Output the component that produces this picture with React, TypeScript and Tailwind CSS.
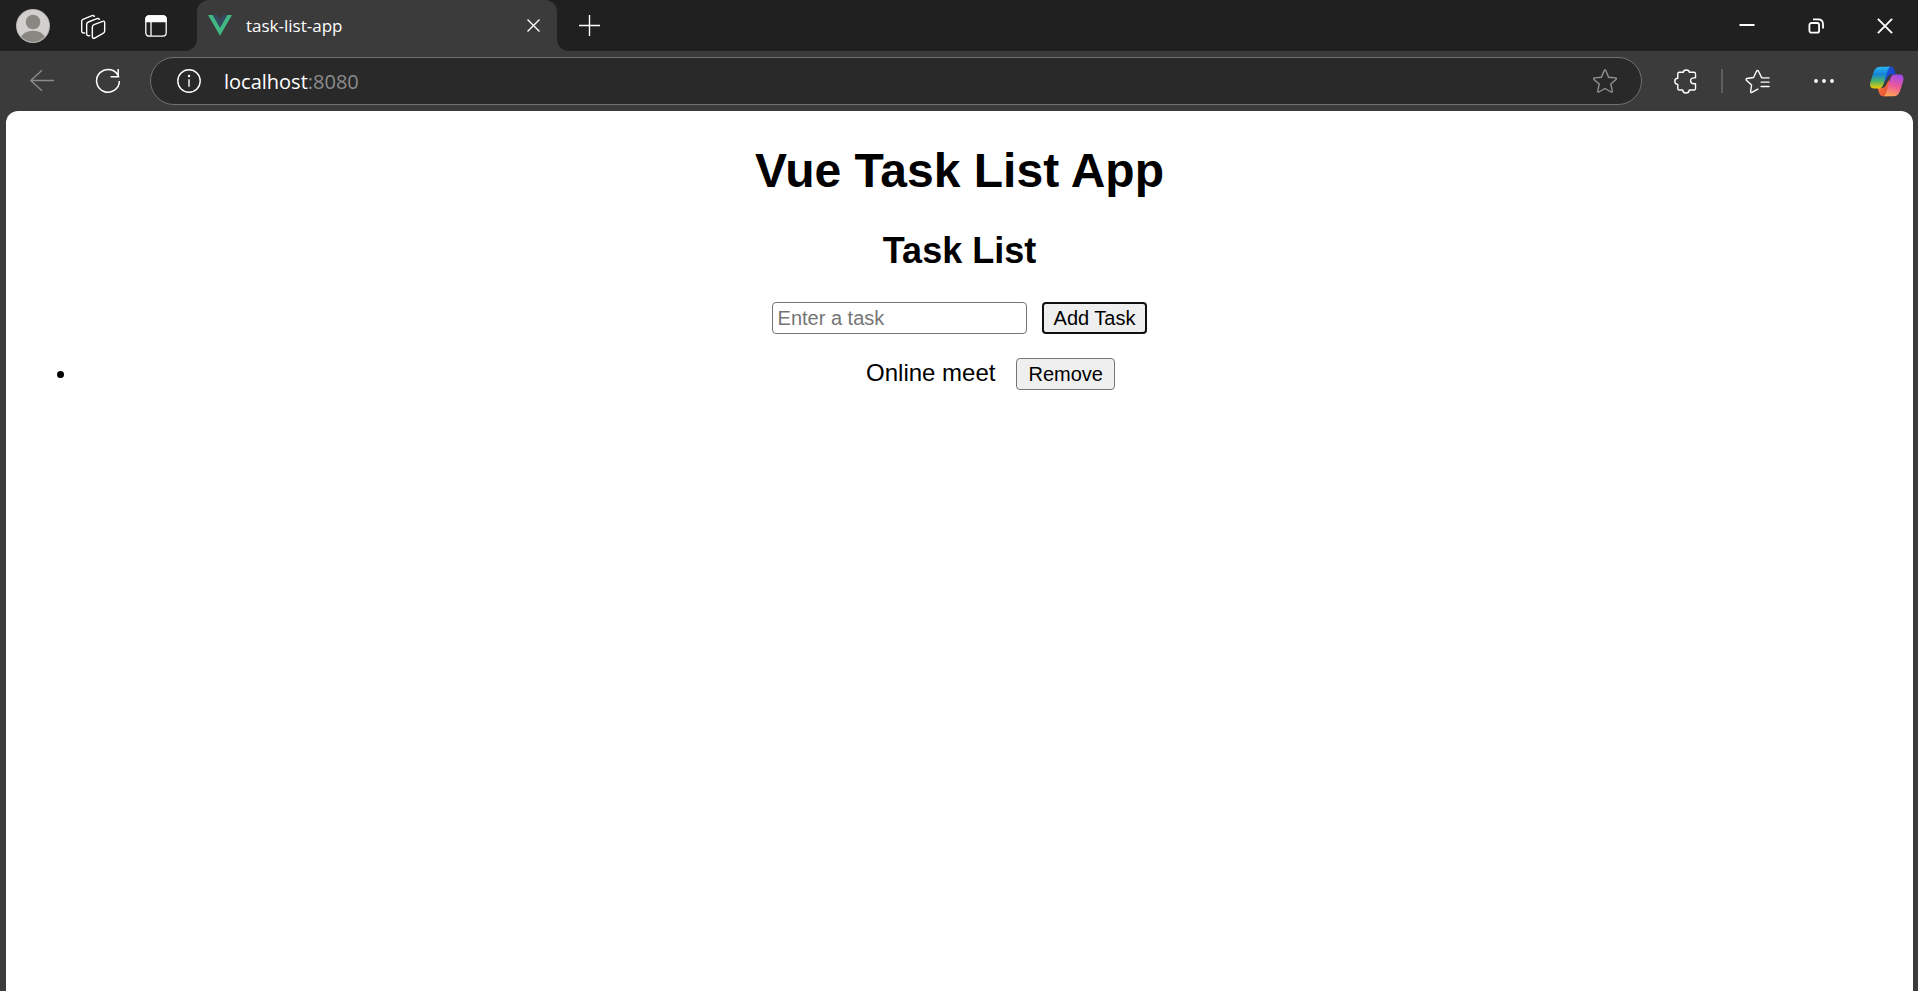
import { useState, type FormEvent, type ReactNode } from "react";

type IconButtonProps = { label: string; children: ReactNode; className?: string };

function IconButton({ label, children, className = "w-9 h-9" }: IconButtonProps) {
  return (
    <button type="button" aria-label={label} className={`flex shrink-0 items-center justify-center ${className}`}>
      {children}
    </button>
  );
}

function TabStrip() {
  return (
    <header className="flex h-[51px] bg-[#3b3b3b] text-white">
      <div className="flex w-[197px] shrink-0 items-center rounded-br-xl bg-[#202020] pl-4 pt-px">
        <IconButton label="Profile" className="h-[34px] w-[34px]">
          <svg viewBox="0 0 34 34" className="h-[34px] w-[34px]">
            <defs>
              <clipPath id="avatar">
                <circle cx="17" cy="17" r="16" />
              </clipPath>
            </defs>
            <circle cx="17" cy="17" r="17" fill="#b9b7b4" />
            <circle cx="17" cy="17" r="16" fill="#d2d0ce" />
            <g clipPath="url(#avatar)" fill="#8a8682">
              <circle cx="17" cy="13" r="7.3" />
              <ellipse cx="17" cy="33" rx="13.5" ry="11.3" />
            </g>
          </svg>
        </IconButton>
        <IconButton label="Workspaces" className="ml-[25px] h-9 w-9">
          <svg viewBox="243 39 75 75" className="h-[25px] w-[25px]" fill="none" stroke="#fff" strokeWidth="4.2" strokeLinecap="round">
            <path d="M277 78q0-5 5-7l26-10q6-2 6 4v25q0 5-5 7l-25 14q-7 3-7-4z" />
            <path d="M269 104q-9 2-9-6V70q0-5 5-7l26-10q5-2 7 2" />
            <path d="M254 96q-9 1-9-6V61q0-4 4-6l27-11q5-2 7 2" />
          </svg>
        </IconButton>
        <IconButton label="Tab actions" className="ml-[27px] h-9 w-9">
          <svg viewBox="0 0 22 22" className="h-[22px] w-[22px]" fill="none" stroke="#fff" strokeWidth="1.3">
            <rect x="0.8" y="0.8" width="20.4" height="20.4" rx="3.4" />
            <path d="M1 6.7V4Q1 1 4 1h14q3 0 3 3v2.700z" fill="#fff" />
            <path d="M6 6v15" />
          </svg>
        </IconButton>
      </div>
      <div className="w-[360px] shrink-0 bg-[#202020]">
        <div className="flex h-full items-center rounded-t-xl bg-[#3b3b3b] pl-[11px] pr-[6px]">
          <svg viewBox="0 0 24 21" className="h-[21px] w-6 shrink-0">
            <path d="M0 0h4.800L12 12.400 19.200 0H24L12 20.800z" fill="#41b883" />
            <path d="M4.800 0h4.400L12 4.800 14.800 0h4.400L12 12.400z" fill="#35495e" />
          </svg>
          <span className="ml-[14px] flex-1 font-['Open_Sans','Noto_Sans',sans-serif] text-[17px] leading-6">task-list-app</span>
          <IconButton label="Close tab">
            <svg viewBox="0 0 13 13" className="h-[13px] w-[13px]" fill="none" stroke="#fff" strokeWidth="1.4">
              <path d="M.5.5l12 12M12.500.5l-12 12" />
            </svg>
          </IconButton>
        </div>
      </div>
      <div className="flex flex-1 items-center justify-between rounded-bl-xl bg-[#202020] pl-[14px] pr-[17px]">
        <IconButton label="New tab">
          <svg viewBox="0 0 21 21" className="h-[21px] w-[21px]" fill="none" stroke="#fff" strokeWidth="1.4">
            <path d="M10.500 0v21M0 10.500h21" />
          </svg>
        </IconButton>
        <div className="flex gap-[37px]">
          <IconButton label="Minimize" className="h-8 w-8">
            <svg viewBox="0 0 16 16" className="h-4 w-4" stroke="#fff" strokeWidth="2">
              <path d="M.5 7h15" />
            </svg>
          </IconButton>
          <IconButton label="Restore" className="h-8 w-8">
            <svg viewBox="0 0 16 16" className="h-4 w-4" fill="none" stroke="#fff" strokeWidth="1.8">
              <rect x="1.400" y="5" width="9.700" height="9.700" rx="2" />
              <path d="M5 1.400h5.200Q15 1.400 15 6.200v4.300" />
            </svg>
          </IconButton>
          <IconButton label="Close window" className="h-8 w-8">
            <svg viewBox="0 0 16 16" className="h-4 w-4" fill="none" stroke="#fff" strokeWidth="1.9">
              <path d="M.9.9l14.200 14.200M15.100.9L.9 15.100" />
            </svg>
          </IconButton>
        </div>
      </div>
    </header>
  );
}

function CopilotLogo() {
  return (
    <svg viewBox="930 196 103 94" className="h-[31px] w-[34px]">
      <defs>
        <linearGradient id="blueGreen" x1="0" y1="0" x2="0" y2="1">
          <stop offset="0" stopColor="#2bb7f0" />
          <stop offset=".35" stopColor="#1585d8" />
          <stop offset=".65" stopColor="#4bb36b" />
          <stop offset="1" stopColor="#f2cb05" />
        </linearGradient>
        <linearGradient id="deepBlue" x1="0" y1="0" x2="1" y2="1">
          <stop offset="0" stopColor="#1b55d8" />
          <stop offset="1" stopColor="#1741c4" />
        </linearGradient>
        <linearGradient id="purplePink" x1=".6" y1="0" x2=".35" y2="1">
          <stop offset="0" stopColor="#a64be8" />
          <stop offset=".5" stopColor="#ec5a9a" />
          <stop offset="1" stopColor="#ffa552" />
        </linearGradient>
        <linearGradient id="orangeRed" x1="0" y1="0" x2="1" y2="1">
          <stop offset="0" stopColor="#fb8a3c" />
          <stop offset="1" stopColor="#e84335" />
        </linearGradient>
      </defs>
      <path d="M974 198h18q9 0 12 10l4 14h-13q-9 0-12 9l-9 17z" fill="url(#deepBlue)" />
      <path d="M988 288h-18q-9 0-12-10l-5-15h13q9 0 13-10l9-16z" fill="url(#orangeRed)" />
      <path d="M992 198h-30q-16 0-21 16l-9 28q-7 22 11 22h11q13 0 17-13l11-37q4-14 10-16z" fill="url(#blueGreen)" />
      <path d="M969 288h32q15 0 20-16l9-28q6-22-11-22h-12q-12 0-16 13l-11 38q-4 13-11 15z" fill="url(#purplePink)" />
    </svg>
  );
}

function Toolbar() {
  return (
    <nav aria-label="Browser toolbar" className="flex h-[60px] items-center bg-[#3b3b3b] pl-6 pr-[13px]">
      <IconButton label="Back">
        <svg viewBox="0 0 24 24" className="h-6 w-6" fill="none" stroke="#8b8b8b" strokeWidth="1.4">
          <path d="M24 11.500H.8M12 1.300L.8 11.500 12 21.700" />
        </svg>
      </IconButton>
      <IconButton label="Refresh" className="ml-[30px] h-9 w-9">
        <svg viewBox="0 0 26 26" className="h-[26px] w-[26px]" fill="none" stroke="#fff" strokeWidth="1.5">
          <path d="M23.800 9.200A11.400 11.400 0 1 0 24.400 13M23.200 1v7.800h-7.600" />
        </svg>
      </IconButton>
      <div className="ml-6 flex h-12 flex-1 items-center rounded-full border border-[#707070] bg-[#292929] pl-5 pr-[18px]">
        <IconButton label="Site information">
          <svg viewBox="0 0 24 24" className="h-6 w-6" fill="none" stroke="#fff" strokeWidth="1.4">
            <circle cx="12" cy="12" r="11.200" />
            <path d="M12 10.300v7.500" />
            <circle cx="12" cy="7" r="1.200" fill="#fff" stroke="none" />
          </svg>
        </IconButton>
        <a href="http://localhost:8080" className="ml-[17px] flex-1 pt-[2px] font-['Open_Sans','Noto_Sans',sans-serif] text-[20px] leading-7 text-white">
          localhost<span className="text-[#8c8c8c]">:8080</span>
        </a>
        <IconButton label="Add to favorites">
          <svg viewBox="0 0 24 24" className="h-6 w-6" fill="none" stroke="#929292" strokeWidth="1.400" strokeLinejoin="round">
            <path d="M11.200 1.600Q12 .3 12.800 1.600L15.600 8.200l7 .7q1.400.4.4 1.500l-5.200 4.700 1.500 7q.1 1.400-1.200.9L12 19.500l-6.100 3.500q-1.300.5-1.200-.9l1.500-7L1 10.400q-1-1.100.4-1.500l7-.7z" />
          </svg>
        </IconButton>
      </div>
      <IconButton label="Extensions" className="ml-[25px] h-9 w-9">
        <svg viewBox="342 208 69 76" className="h-[25px] w-[23px]" fill="none" stroke="#fff" strokeWidth="4.200" strokeLinejoin="round">
          <path d="M358 218h12q0-7 9-7t9 7h14q5 0 5 5v12h-5q-10 0-10 9t10 9h5v14q0 5-5 5h-14q-1 9-10 9t-10-9h-10q-5 0-5-5v-12q-9-1-9-10t9-9v-13q0-5 5-5z" />
        </svg>
      </IconButton>
      <div className="ml-[18px] h-6 w-[2px] bg-[#5e5e5e]" />
      <IconButton label="Favorites" className="ml-4 h-9 w-9">
        <svg viewBox="556 208 76 76" className="h-[25px] w-[25px]" fill="none" stroke="#fff" strokeWidth="4.200" strokeLinecap="round" strokeLinejoin="round">
          <path d="M629 235h-22l-10-20q-3-5-6 0l-9 19-20 3q-4 1-2 5l16 15-3 19q0 5 4 3l18-10M605 248h24M605 261h24" />
        </svg>
      </IconButton>
      <IconButton label="Settings and more" className="ml-[31px] h-9 w-9">
        <svg viewBox="0 0 20 4" className="h-1 w-5" fill="#fff">
          <circle cx="2" cy="2" r="1.900" />
          <circle cx="10" cy="2" r="1.900" />
          <circle cx="18" cy="2" r="1.900" />
        </svg>
      </IconButton>
      <IconButton label="Copilot" className="ml-[27px] h-9 w-9">
        <CopilotLogo />
      </IconButton>
    </nav>
  );
}

const controlButton = "h-8 rounded-[4px] bg-[#efefef] text-[20px] leading-6 text-black";

function TaskList() {
  const [tasks, setTasks] = useState(["Online meet"]);
  const [draft, setDraft] = useState("");

  const addTask = (event: FormEvent) => {
    event.preventDefault();
    if (!draft.trim()) return;
    setTasks([...tasks, draft.trim()]);
    setDraft("");
  };

  return (
    <section>
      <h2 className="mt-8 text-center text-[36px] font-bold leading-[41px]">Task List</h2>
      <form onSubmit={addTask} className="mt-[31px] flex items-center justify-center gap-[15px]">
        <input
          type="text"
          aria-label="Enter a task"
          placeholder="Enter a task"
          value={draft}
          onChange={(event) => setDraft(event.target.value)}
          className="h-8 w-[255px] rounded-[4px] border border-[#767676] bg-white px-[5px] text-[20px] leading-6 placeholder:text-[#757575]"
        />
        <button type="submit" className={`${controlButton} border-2 border-[#101010] px-[10px]`}>
          Add Task
        </button>
      </form>
      <ul className="mt-6 pl-[62px]">
        {tasks.map((task, index) => (
          <li key={index} className="relative flex items-center justify-center gap-[21px] text-[24px] leading-8">
            <span aria-hidden="true" className="absolute -left-[11px] top-[13px] h-[7px] w-[7px] rounded-full bg-black" />
            <span className="-mt-[2px]">{task}</span>
            <button
              type="button"
              onClick={() => setTasks(tasks.filter((_, i) => i !== index))}
              className={`${controlButton} border border-[#767676] px-[11px]`}
            >
              Remove
            </button>
          </li>
        ))}
      </ul>
    </section>
  );
}

export default function App() {
  return (
    <div className="flex min-h-screen flex-col bg-[#3b3b3b]">
      <TabStrip />
      <Toolbar />
      <main className="ml-[6px] mr-[5px] flex-1 rounded-t-xl bg-white pt-8 font-['Liberation_Sans',Arial,sans-serif] text-black">
        <h1 className="text-center text-[48px] font-bold leading-[55px]">Vue Task List App</h1>
        <TaskList />
      </main>
    </div>
  );
}
